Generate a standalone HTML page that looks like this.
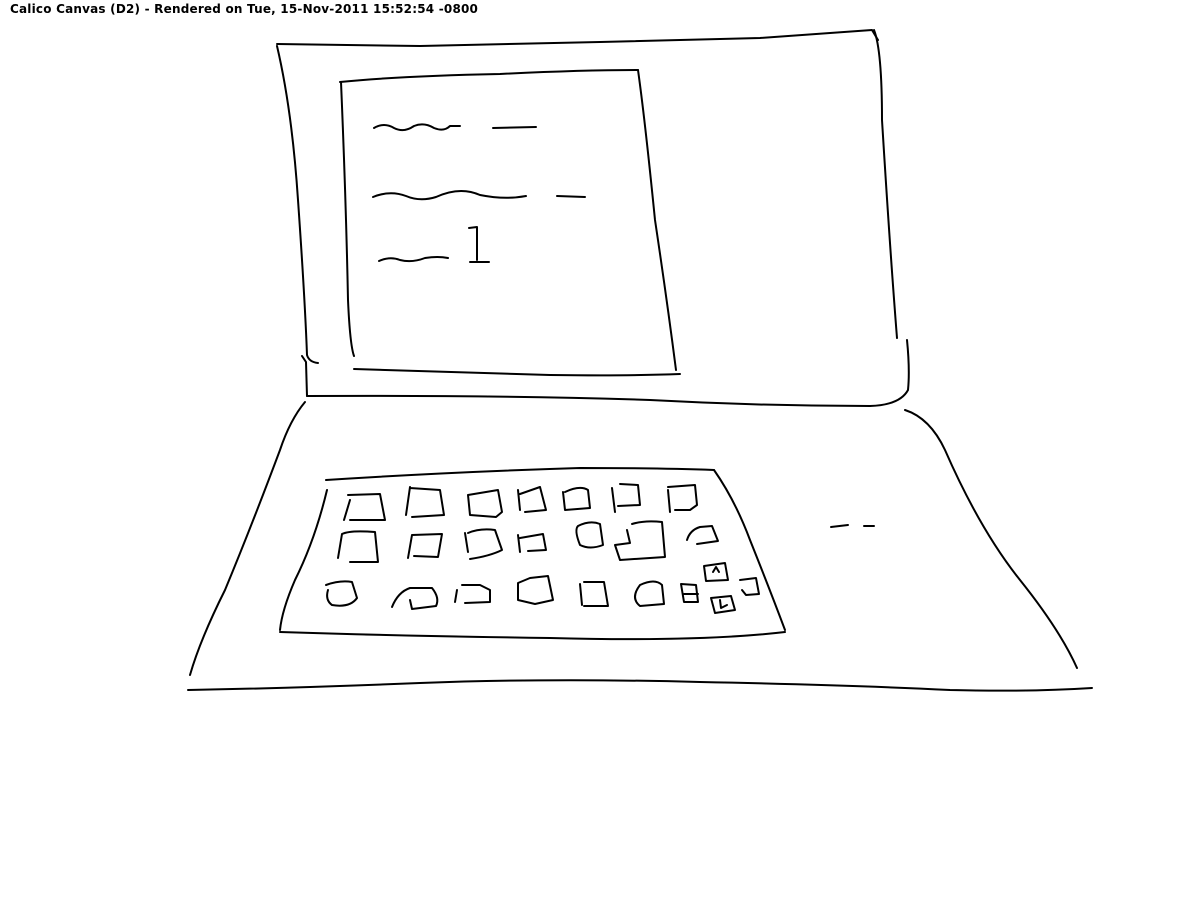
<!DOCTYPE html>
<html><head><meta charset="utf-8"><style>
html,body{margin:0;padding:0;background:#fff;width:1200px;height:900px;overflow:hidden}
.t{position:absolute;left:10px;top:2px;font:bold 12px "DejaVu Sans","Liberation Sans",sans-serif;color:#000;letter-spacing:0.2px}
svg{position:absolute;left:0;top:0}
path{fill:none;stroke:#000;stroke-width:2;stroke-linecap:round;stroke-linejoin:round}
</style></head><body>
<div class="t">Calico Canvas (D2) - Rendered on Tue, 15-Nov-2011 15:52:54 -0800</div>
<svg width="1200" height="900" viewBox="0 0 1200 900">
<path d="M277,44 L420,46 L600,42 L760,38 L872,30 L878,40"/>
<path d="M277,46 Q292,110 298,200 Q305,300 307,355 Q309,362 318,363"/>
<path d="M302,356 L306,362 L307,396"/>
<path d="M874,30 Q882,50 882,120 Q890,250 897,338"/>
<path d="M907,340 Q910,370 908,390 Q900,405 870,406"/>
<path d="M307,396 Q500,395 650,400 Q760,406 870,406"/>
<path d="M340,82 Q400,76 500,74 Q580,70 638,70"/>
<path d="M341,82 Q346,200 348,300 Q350,345 354,356"/>
<path d="M638,70 Q645,120 655,220 Q667,300 676,370"/>
<path d="M354,369 Q450,372 550,375 Q630,376 680,374"/>
<path d="M374,128 Q384,122 394,128 Q404,133 414,126 Q424,122 434,128 Q444,132 450,126 L460,126"/>
<path d="M493,128 L536,127"/>
<path d="M373,197 Q390,190 406,196 Q420,202 436,197 Q460,186 480,195 Q505,200 526,196"/>
<path d="M557,196 L585,197"/>
<path d="M379,261 Q390,256 400,260 Q412,263 425,258 Q438,256 448,258"/>
<path d="M469,228 L477,227 L477,260 M470,262 L489,262"/>
<path d="M305,402 Q290,420 280,450 Q250,530 225,590 Q200,640 190,675"/>
<path d="M188,690 Q300,688 420,683 Q550,678 700,682 Q850,685 950,690 Q1030,692 1092,688"/>
<path d="M905,410 Q930,418 945,450 Q980,530 1020,580 Q1060,630 1077,668"/>
<path d="M831,527 L848,525 M864,526 L874,526"/>
<path d="M326,480 Q450,472 580,468 Q660,468 714,470"/>
<path d="M327,490 Q315,540 295,580 Q282,610 280,630"/>
<path d="M280,632 Q400,636 550,638 Q700,642 785,632"/>
<path d="M714,470 Q735,500 750,540 Q770,590 785,630"/>
<path d="M348,495 L380,494 L385,520 L350,520 M350,500 L344,520"/>
<path d="M410,487 L406,515 M410,488 L440,490 L444,515 L412,517"/>
<path d="M468,495 L498,490 L502,512 L496,517 L470,515 Z"/>
<path d="M518,490 L520,510 M520,494 L540,487 L546,510 L525,512"/>
<path d="M563,492 L565,510 L590,508 L588,490 Q580,485 565,492"/>
<path d="M612,488 L615,512 M618,506 L640,505 L638,485 L620,484"/>
<path d="M668,490 L670,512 M668,487 L695,485 L697,505 L690,510 L675,510"/>
<path d="M342,534 L338,558 M342,534 Q350,530 375,532 L378,562 L350,562"/>
<path d="M412,535 L408,558 M412,535 L442,534 L438,557 L414,556"/>
<path d="M465,533 L468,552 M468,533 Q480,528 495,530 L502,550 Q490,556 470,559"/>
<path d="M518,535 L520,552 M520,538 L543,534 L546,550 L528,551"/>
<path d="M578,526 Q590,520 600,524 L603,545 Q590,550 580,545 Q574,530 578,526"/>
<path d="M627,530 L630,543 L615,545 L620,560 L665,557 L662,522 Q645,520 632,524"/>
<path d="M687,540 Q690,530 700,527 L712,526 L718,541 L697,544"/>
<path d="M326,585 Q340,580 352,582 L357,598 Q350,608 332,605 Q325,600 328,590"/>
<path d="M392,607 Q398,592 410,588 L432,588 Q440,598 436,606 L412,609 L410,600"/>
<path d="M457,590 L455,602 M462,585 L480,585 L490,590 L490,602 L465,603"/>
<path d="M518,583 L530,578 L548,576 L553,600 L535,604 L518,600 Z"/>
<path d="M580,584 L582,605 M584,582 L604,582 L608,606 L584,606"/>
<path d="M640,585 Q655,578 662,585 L664,604 L640,606 Q630,598 640,585"/>
<path d="M681,584 L696,585 L698,602 L684,602 Z M684,594 L698,594"/>
<path d="M704,566 L725,563 L728,580 L706,581 Z M713,572 L716,567 L719,572"/>
<path d="M711,598 L731,596 L735,610 L715,613 Z M720,600 L721,608 L727,605"/>
<path d="M740,580 L756,578 L759,594 L746,595 L742,590"/>
</svg>
</body></html>
